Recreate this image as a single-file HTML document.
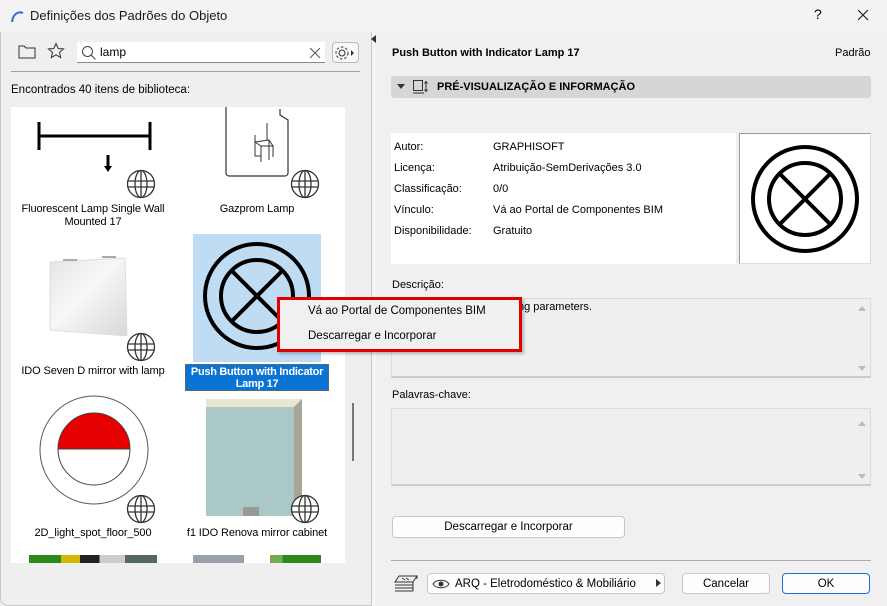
<!DOCTYPE html>
<html><head><meta charset="utf-8"><style>
*{box-sizing:border-box;margin:0;padding:0}
body{width:887px;height:606px;overflow:hidden;background:#f0f0f0;font-family:"Liberation Sans",sans-serif;font-size:11px;color:#000;position:relative}
.a{position:absolute}
.t{white-space:nowrap}
.globe{position:absolute;width:30px;height:30px}
.btn{position:absolute;background:#fdfdfd;border:1px solid #c8c8c8;border-radius:4px;text-align:center;font-size:11.5px;line-height:20px}
.lbl{font-size:11px;letter-spacing:-0.1px}
</style></head><body>
<div class="a" style="left:0;top:0;width:887px;height:32px;background:#f3f3f3"></div>
<svg class="a" style="left:9px;top:8px" width="16" height="16"><path d="M3 14 C4 6 9 3 14 5" stroke="#2a6bd6" stroke-width="2" fill="none"/></svg>
<div class="a t" style="left:30px;top:8px;font-size:13px;color:#1a1a1a">Definições dos Padrões do Objeto</div>
<div class="a t" style="left:814px;top:6px;font-size:14px">?</div>
<svg class="a" style="left:857px;top:9px" width="12" height="12"><path d="M1 1L11 11M11 1L1 11" stroke="#222" stroke-width="1.2"/></svg>
<div class="a" style="left:0;top:32px;width:372px;height:574px;background:#efefef;border:1px solid #c9c9c9;border-top:none;border-radius:0 0 0 8px"></div>
<div class="a" style="left:372px;top:32px;width:4px;height:574px;background:#f5f5f5"></div>
<svg class="a" style="left:18px;top:44px" width="18" height="16"><path d="M1 2h5l2 2h9v10H1z" stroke="#333" fill="none"/></svg>
<svg class="a" style="left:47px;top:42px" width="18" height="18"><path d="M9 1.5l2.2 5 5.3.4-4 3.5 1.2 5.2L9 12.8 4.3 15.6l1.2-5.2-4-3.5 5.3-.4z" stroke="#333" fill="none"/></svg>
<div class="a" style="left:77px;top:42px;width:248px;height:21px;background:#fff;border-bottom:1px solid #888"></div>
<svg class="a" style="left:81px;top:45px" width="16" height="16"><circle cx="6.5" cy="6.5" r="5" stroke="#444" fill="none"/><path d="M10 10l4.5 4.5" stroke="#444"/></svg>
<div class="a t" style="left:100px;top:45px;font-size:12px">lamp</div>
<svg class="a" style="left:309px;top:47px" width="12" height="12"><path d="M1 1L11 11M11 1L1 11" stroke="#555"/></svg>
<div class="a" style="left:332px;top:42px;width:27px;height:21px;border:1px solid #bbb;border-radius:4px;background:#f8f8f8"></div>
<svg class="a" style="left:334px;top:44px" width="24" height="18"><circle cx="8" cy="9" r="3" stroke="#333" fill="none"/><circle cx="8" cy="9" r="6" stroke="#333" fill="none" stroke-dasharray="2.5 2"/><path d="M17 6l3 3-3 3z" fill="#333"/></svg>
<div class="a" style="left:11px;top:71px;width:349px;height:1px;background:#a0a0a0"></div>
<div class="a t" style="left:11px;top:84px;font-size:11.5px">Encontrados 40 itens de biblioteca:</div>
<div class="a" style="left:11px;top:107px;width:334px;height:456px;background:#fff;overflow:hidden">
 <svg class="a" style="left:25px;top:5px" width="120" height="60"><path d="M13 10v28M124 10v28M13 24h111M82 43v14" stroke="#000" stroke-width="3" fill="none" transform="translate(-10 0)"/><path d="M68 54l4 6 4-6z" fill="#000"/></svg>
 <svg class="a" style="left:213px;top:0px" width="70" height="70"><path d="M2 0v66a3 3 0 0 0 3 3h56a3 3 0 0 0 3-3V13l-8-5v-6" stroke="#333" fill="none" stroke-width="1.2"/><path d="M31 28v21h6M31 35l14-2v20M31 35l6 4h12l-4-6M37 39v16M49 39v11M43 16v17" stroke="#333" fill="none"/></svg>
 <div class="a t lbl" style="left:-6px;top:96px;width:176px;text-align:center;line-height:13px">Fluorescent Lamp Single Wall<br>Mounted 17</div>
 <div class="a t lbl" style="left:170px;top:96px;width:152px;text-align:center">Gazprom Lamp</div>
 <svg class="a" style="left:36px;top:147px" width="100" height="82"><defs><linearGradient id="mg" x1="0" y1="0" x2="1" y2="1"><stop offset="0" stop-color="#e4e4e4"/><stop offset=".45" stop-color="#f7f7f7"/><stop offset="1" stop-color="#d8d8d8"/></linearGradient></defs><path d="M3 8l75-4 2 78-77-6z" fill="url(#mg)" stroke="#ddd"/><path d="M16 6h14M55 3h14" stroke="#aaa" stroke-width="2"/></svg>
 <div class="a t lbl" style="left:-6px;top:258px;width:176px;text-align:center">IDO Seven D mirror with lamp</div>
 <div class="a" style="left:182px;top:127px;width:128px;height:128px;background:#bfdcf2"></div>
 <svg class="a" style="left:182px;top:127px" width="128" height="128"><circle cx="64" cy="62" r="52" stroke="#000" stroke-width="4" fill="none"/><circle cx="64" cy="62" r="36" stroke="#000" stroke-width="4" fill="none"/><path d="M38 36l52 52M90 36l-52 52" stroke="#000" stroke-width="4"/></svg>
 <div class="a t" style="left:174px;top:257px;width:144px;height:27px;background:#0a73d6;border:1px dotted #a06000;color:#fff;font-weight:bold;font-size:11px;letter-spacing:-0.3px;line-height:12px;text-align:center;padding-top:1px">Push Button with Indicator<br>Lamp 17</div>
 <svg class="a" style="left:26px;top:283px" width="115" height="120"><circle cx="57" cy="60" r="54" stroke="#555" fill="#fff"/><path d="M21 59a36 36 0 0 1 72 0z" fill="#e60000" stroke="#444"/><path d="M21 59a36 36 0 0 0 72 0" fill="none" stroke="#444"/></svg>
 <div class="a t lbl" style="left:-6px;top:420px;width:176px;text-align:center">2D_light_spot_floor_500</div>
 <div class="a" style="left:195px;top:292px;width:96px;height:117px;background:#a9c8c6;border-top:8px solid #e8e6d2;border-right:8px solid #a6a596"></div>
 <div class="a" style="left:232px;top:400px;width:16px;height:9px;background:#999"></div>
 <div class="a t lbl" style="left:158px;top:420px;width:176px;text-align:center">f1 IDO Renova mirror cabinet</div>
 <div class="a" style="left:18px;top:448px;width:128px;height:10px;background:linear-gradient(90deg,#2a8a1a 0 25%,#d4b800 25% 40%,#222 40% 55%,#ccc 55% 75%,#566 75%)"></div>
 <div class="a" style="left:182px;top:448px;width:128px;height:10px;background:linear-gradient(90deg,#9aa0aa 0 40%,#fff 40% 60%,#7a5 60% 70%,#2a8a1a 70%)"></div>
 <svg class="globe" style="left:115px;top:62px" viewBox="0 0 30 30"><g stroke="#333" fill="#fff" stroke-width="1.3"><circle cx="15" cy="15" r="13.5"/><ellipse cx="15" cy="15" rx="6" ry="13.5" fill="none"/><path d="M2 12h26M2 18h26M15 1.5v27" fill="none"/></g></svg>
 <svg class="globe" style="left:279px;top:62px" viewBox="0 0 30 30"><g stroke="#333" fill="#fff" stroke-width="1.3"><circle cx="15" cy="15" r="13.5"/><ellipse cx="15" cy="15" rx="6" ry="13.5" fill="none"/><path d="M2 12h26M2 18h26M15 1.5v27" fill="none"/></g></svg>
 <svg class="globe" style="left:115px;top:225px" viewBox="0 0 30 30"><g stroke="#333" fill="#fff" stroke-width="1.3"><circle cx="15" cy="15" r="13.5"/><ellipse cx="15" cy="15" rx="6" ry="13.5" fill="none"/><path d="M2 12h26M2 18h26M15 1.5v27" fill="none"/></g></svg>
 <svg class="globe" style="left:115px;top:387px" viewBox="0 0 30 30"><g stroke="#333" fill="#fff" stroke-width="1.3"><circle cx="15" cy="15" r="13.5"/><ellipse cx="15" cy="15" rx="6" ry="13.5" fill="none"/><path d="M2 12h26M2 18h26M15 1.5v27" fill="none"/></g></svg>
 <svg class="globe" style="left:279px;top:387px" viewBox="0 0 30 30"><g stroke="#333" fill="#fff" stroke-width="1.3"><circle cx="15" cy="15" r="13.5"/><ellipse cx="15" cy="15" rx="6" ry="13.5" fill="none"/><path d="M2 12h26M2 18h26M15 1.5v27" fill="none"/></g></svg>
</div>
<div class="a" style="left:352px;top:403px;width:2px;height:58px;background:#777"></div>
<svg class="a" style="left:371px;top:35px" width="6" height="8"><path d="M5 0v8L0 4z" fill="#333"/></svg>
<div class="a t" style="left:392px;top:47px;font-weight:bold;font-size:11px">Push Button with Indicator Lamp 17</div>
<div class="a t" style="left:835px;top:47px;font-size:11px">Padrão</div>
<div class="a" style="left:391px;top:76px;width:480px;height:22px;background:#d6d6d6;border-radius:3px"></div>
<svg class="a" style="left:397px;top:84px" width="8" height="6"><path d="M0 0h8L4 5z" fill="#333"/></svg>
<svg class="a" style="left:412px;top:79px" width="20" height="16"><rect x="1.5" y="1.5" width="9" height="10" stroke="#333" fill="none"/><path d="M1 14h11M14 3v9M12.5 4.5l1.5-2 1.5 2M12.5 10.5l1.5 2 1.5-2" stroke="#333" fill="none"/></svg>
<div class="a t" style="left:437px;top:81px;font-weight:bold;font-size:11px">PRÉ-VISUALIZAÇÃO E INFORMAÇÃO</div>
<div class="a" style="left:391px;top:133px;width:345px;height:131px;background:#fff"></div>
<div class="a" style="left:394px;top:137px;line-height:21px;font-size:11px">Autor:<br>Licença:<br>Classificação:<br>Vínculo:<br>Disponibilidade:</div>
<div class="a t" style="left:493px;top:137px;line-height:21px;font-size:11px">GRAPHISOFT<br>Atribuição-SemDerivações 3.0<br>0/0<br>Vá ao Portal de Componentes BIM<br>Gratuito</div>
<div class="a" style="left:739px;top:133px;width:132px;height:131px;background:#fff;border:1px solid #999;border-right-color:#ddd;border-bottom-color:#ddd"></div>
<svg class="a" style="left:739px;top:133px" width="132" height="131"><circle cx="66" cy="66" r="52" stroke="#000" stroke-width="4" fill="none"/><circle cx="66" cy="66" r="36" stroke="#000" stroke-width="4" fill="none"/><path d="M40 40l52 52M92 40l-52 52" stroke="#000" stroke-width="4"/></svg>
<div class="a t" style="left:392px;top:279px;font-size:11px">Descrição:</div>
<div class="a" style="left:391px;top:298px;width:480px;height:80px;background:#efefef;border:1px solid #dcdcdc;border-bottom:2px solid #ccc"></div>
<div class="a t" style="left:507px;top:301px;font-size:11px">sting parameters.</div>
<div class="a t" style="left:392px;top:389px;font-size:11px">Palavras-chave:</div>
<div class="a" style="left:391px;top:408px;width:480px;height:78px;background:#efefef;border:1px solid #dcdcdc;border-bottom:2px solid #ccc"></div>
<svg class="a" style="left:855px;top:302px" width="14" height="180"><path d="M3 9l4-5 4 5zM3 64l4 5 4-5z" fill="#bbb"/><path d="M3 124l4-5 4 5zM3 172l4 5 4-5z" fill="#bbb"/></svg>
<div class="btn" style="left:392px;top:516px;width:233px;height:22px">Descarregar e Incorporar</div>
<div class="a" style="left:391px;top:560px;width:480px;height:1px;background:#aaa"></div>
<svg class="a" style="left:393px;top:574px" width="26" height="20"><path d="M6 2h18l-4 6H2zM2 11h18M2 14h18M2 17h18M20 8v9M24 2v3" stroke="#333" fill="none"/><path d="M9 4l3 2M13 4l3 2" stroke="#333"/></svg>
<div class="btn" style="left:427px;top:573px;width:238px;height:21px;text-align:left;padding-left:27px">ARQ - Eletrodoméstico &amp; Mobiliário</div>
<svg class="a" style="left:432px;top:578px" width="18" height="12"><path d="M1 6C4 1 14 1 17 6C14 11 4 11 1 6z" stroke="#333" fill="none"/><circle cx="9" cy="6" r="2.5" fill="#333"/></svg>
<svg class="a" style="left:656px;top:579px" width="5" height="8"><path d="M0 0l5 4-5 4z" fill="#333"/></svg>
<div class="btn" style="left:682px;top:573px;width:88px;height:21px">Cancelar</div>
<div class="btn" style="left:782px;top:573px;width:88px;height:21px;border-color:#1a6fd0">OK</div>
<div class="a" style="left:277px;top:297px;width:245px;height:55px;background:#f0f0f0;border:3px solid #e00000;box-shadow:2px 2px 3px rgba(0,0,0,.25)"></div>
<div class="a t" style="left:308px;top:305px;font-size:11.5px">Vá ao Portal de Componentes BIM</div>
<div class="a t" style="left:308px;top:330px;font-size:11.5px">Descarregar e Incorporar</div>
</body></html>
